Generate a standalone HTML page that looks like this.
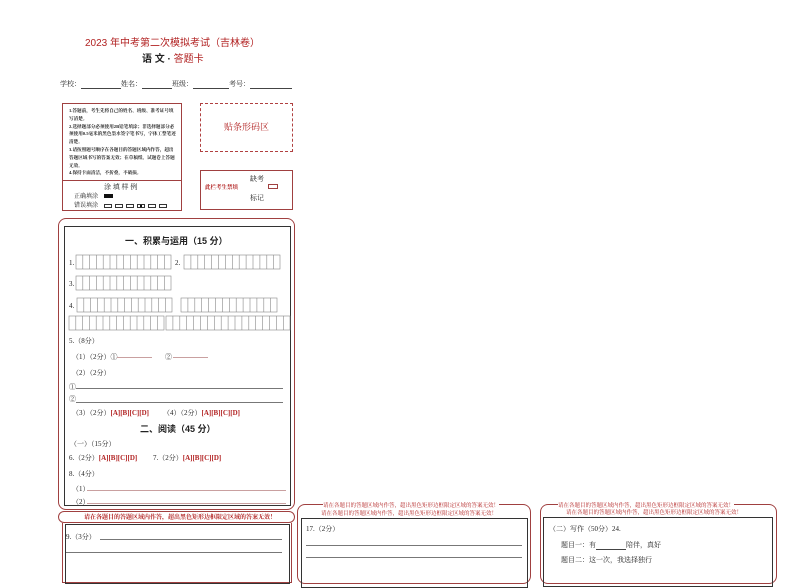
<!DOCTYPE html>
<html><head><meta charset="utf-8">
<style>
*{margin:0;padding:0;box-sizing:border-box}
body{width:794px;height:562px;background:#fff;position:relative;overflow:hidden;font-family:"Liberation Serif","Noto Serif CJK SC","Noto Sans CJK SC",serif;color:#222}
.a{position:absolute;white-space:nowrap}
.s{font-size:7px}
.r{color:#b22222}
.ul{display:inline-block;border-bottom:1px solid #444;vertical-align:bottom}
.rl{position:absolute;border-bottom:1px solid #c9a0a0}
.bl{position:absolute;border-bottom:1px solid #777}
.eb{display:inline-block;width:8px;height:4px;border:1px solid #333;margin-right:3px;vertical-align:middle}
</style></head><body>
<div class="a r" style="left:85px;top:34px;font-size:10px;font-family:'Liberation Sans','Noto Sans CJK SC',sans-serif">2023 年中考第二次模拟考试（吉林卷）</div>
<div class="a" style="left:142px;top:50px;font-size:10px;font-weight:bold;font-family:'Liberation Sans','Noto Sans CJK SC',sans-serif">语 文 · <span class="r" style="font-weight:normal">答题卡</span></div>
<div class="a" style="left:60px;top:79px;font-size:7px">学校：<span class="ul" style="width:40px"></span>姓名：<span class="ul" style="width:30px"></span>班级：<span class="ul" style="width:36px"></span>考号：<span class="ul" style="width:42px"></span></div>

<div class="a" style="left:62px;top:103px;width:120px;height:108px;border:1px solid #a04040"></div>
<div class="a" style="left:62px;top:180px;width:120px;height:1px;background:#a04040"></div>
<div class="a" style="left:69px;top:107px;font-size:4.6px;line-height:7.8px;white-space:normal;width:108px;font-weight:bold">1.答题前，考生先将自己的姓名、班级、准考证号填写清楚。<br>2.选择题部分必须使用2B铅笔填涂；非选择题部分必须使用0.5毫米的黑色墨水签字笔书写，字体工整笔迹清楚。<br>3.请按照题号顺序在各题目的答题区域内作答，超出答题区域书写的答案无效；在草稿纸、试题卷上答题无效。<br>4.保持卡面清洁，不折叠，不破损。</div>
<div class="a" style="left:104px;top:182px;font-size:7px">涂 填 样 例</div>
<div class="a" style="left:74px;top:191px;font-size:6px">正确填涂 <span style="display:inline-block;width:9px;height:4px;background:#111;margin-left:4px"></span></div>
<div class="a" style="left:74px;top:200px;font-size:6px">错误填涂 <span style="margin-left:4px"></span><span class="eb"></span><span class="eb"></span><span class="eb"></span><span class="eb" style="background:linear-gradient(90deg,#fff 30%,#111 30%,#111 70%,#fff 70%)"></span><span class="eb"></span><span class="eb"></span></div>

<div class="a" style="left:200px;top:103px;width:93px;height:49px;border:1px dashed #b04040"></div>
<div class="a r" style="left:224px;top:120px;font-size:9px">贴条形码区</div>
<div class="a" style="left:200px;top:170px;width:93px;height:40px;border:1px solid #a04040"></div>
<div class="a" style="left:250px;top:174px;font-size:7px">缺考</div>
<div class="a r" style="left:205px;top:183px;font-size:5.5px;font-weight:bold">此栏考生禁填</div>
<div class="a" style="left:268px;top:184px;width:10px;height:5px;border:1px solid #a04040"></div>
<div class="a" style="left:250px;top:193px;font-size:7px">标记</div>

<div class="a" style="left:58px;top:218px;width:237px;height:292px;border:1px solid #a04040;border-radius:8px"></div>
<div class="a" style="left:64px;top:226px;width:227px;height:280px;border:1px solid #333"></div>
<div class="a" style="left:125px;top:234px;font-size:9px;font-weight:bold;font-family:'Liberation Sans','Noto Sans CJK SC',sans-serif">一、积累与运用（15 分）</div>

<svg class="a" style="left:0;top:0" width="794" height="562">
<g stroke="#888" stroke-width="0.6" fill="none">
<rect x="76" y="255" width="95" height="14"/><path d="M82.8 255v14M89.6 255v14M96.4 255v14M103.2 255v14M110 255v14M116.8 255v14M123.6 255v14M130.4 255v14M137.2 255v14M144 255v14M150.8 255v14M157.6 255v14M164.4 255v14"/>
<rect x="184" y="255" width="96" height="14"/><path d="M190.9 255v14M197.8 255v14M204.7 255v14M211.6 255v14M218.5 255v14M225.4 255v14M232.3 255v14M239.2 255v14M246.1 255v14M253 255v14M259.9 255v14M266.8 255v14M273.7 255v14"/>
<rect x="76" y="276" width="95" height="14"/><path d="M82.8 276v14M89.6 276v14M96.4 276v14M103.2 276v14M110 276v14M116.8 276v14M123.6 276v14M130.4 276v14M137.2 276v14M144 276v14M150.8 276v14M157.6 276v14M164.4 276v14"/>
<rect x="77" y="298" width="95" height="14"/><path d="M83.8 298v14M90.6 298v14M97.4 298v14M104.2 298v14M111 298v14M117.8 298v14M124.6 298v14M131.4 298v14M138.2 298v14M145 298v14M151.8 298v14M158.6 298v14M165.4 298v14"/>
<rect x="181" y="298" width="96" height="14"/><path d="M187.9 298v14M194.8 298v14M201.7 298v14M208.6 298v14M215.5 298v14M222.4 298v14M229.3 298v14M236.2 298v14M243.1 298v14M250 298v14M256.9 298v14M263.8 298v14M270.7 298v14"/>
<rect x="69" y="316" width="95" height="14"/><path d="M75.8 316v14M82.6 316v14M89.4 316v14M96.2 316v14M103 316v14M109.8 316v14M116.6 316v14M123.4 316v14M130.2 316v14M137 316v14M143.8 316v14M150.6 316v14M157.4 316v14"/>
<rect x="166" y="316" width="124" height="14"/><path d="M172.9 316v14M179.8 316v14M186.7 316v14M193.6 316v14M200.5 316v14M207.4 316v14M214.3 316v14M221.2 316v14M228.1 316v14M235 316v14M241.9 316v14M248.8 316v14M255.7 316v14M262.6 316v14M269.5 316v14M276.4 316v14M283.3 316v14"/>
</g></svg>
<div class="a s" style="left:69px;top:259px">1.</div>
<div class="a s" style="left:175px;top:259px">2.</div>
<div class="a s" style="left:69px;top:280px">3.</div>
<div class="a s" style="left:69px;top:302px">4.</div>

<div class="a s" style="left:69px;top:336px">5.（8分）</div>
<div class="a s" style="left:72px;top:352px">（1）（2分）①</div>
<div class="rl" style="left:117px;top:357px;width:35px"></div>
<div class="a s" style="left:165px;top:352px">②</div>
<div class="rl" style="left:173px;top:357px;width:35px"></div>
<div class="a s" style="left:72px;top:368px">（2）（2分）</div>
<div class="a s" style="left:69px;top:382px">①</div>
<div class="bl" style="left:76px;top:388px;width:207px"></div>
<div class="a s" style="left:69px;top:394px">②</div>
<div class="bl" style="left:76px;top:402px;width:207px"></div>
<div class="a s" style="left:72px;top:408px">（3）（2分）<span class="r" style="font-weight:bold">[A][B][C][D]</span>&nbsp;&nbsp;&nbsp;&nbsp;&nbsp;&nbsp;&nbsp;&nbsp;（4）（2分）<span class="r" style="font-weight:bold">[A][B][C][D]</span></div>
<div class="a" style="left:140px;top:422px;font-size:9px;font-weight:bold;font-family:'Liberation Sans','Noto Sans CJK SC',sans-serif">二、阅读（45 分）</div>
<div class="a s" style="left:70px;top:439px">（一）（15分）</div>
<div class="a s" style="left:69px;top:453px">6.（2分）<span class="r" style="font-weight:bold">[A][B][C][D]</span>&nbsp;&nbsp;&nbsp;&nbsp;&nbsp;&nbsp;&nbsp;&nbsp;&nbsp;7.（2分）<span class="r" style="font-weight:bold">[A][B][C][D]</span></div>
<div class="a s" style="left:69px;top:469px">8.（4分）</div>
<div class="a s" style="left:72px;top:484px">（1）</div>
<div class="rl" style="left:87px;top:490px;width:199px"></div>
<div class="a s" style="left:72px;top:497px">（2）</div>
<div class="rl" style="left:87px;top:503px;width:199px"></div>

<div class="a" style="left:58px;top:511px;width:237px;height:12px;border:1px solid #a04040;border-radius:6px"></div>
<div class="a r" style="left:84px;top:512px;font-size:6px;font-weight:bold">请在各题目的答题区域内作答，超出黑色矩形边框限定区域的答案无效！</div>
<div class="a" style="left:62px;top:523px;width:230px;height:60px;border:1px solid #a04040;border-top:none"></div>
<div class="a" style="left:65px;top:524px;width:225px;height:60px;border:1px solid #333"></div>
<div class="a s" style="left:66px;top:532px">9.（3分）</div>
<div class="bl" style="left:100px;top:539px;width:182px"></div>
<div class="bl" style="left:66px;top:552px;width:216px"></div>

<div class="a" style="left:297px;top:504px;width:234px;height:80px;border:1px solid #a04040;border-radius:8px"></div>
<div class="a r" style="left:323px;top:501px;font-size:5.5px;background:#fff">请在各题目的答题区域内作答，超出黑色矩形边框限定区域的答案无效！</div>
<div class="a r" style="left:321px;top:509px;font-size:5.5px">请在各题目的答题区域内作答，超出黑色矩形边框限定区域的答案无效！</div>
<div class="a" style="left:301px;top:518px;width:227px;height:70px;border:1px solid #333"></div>
<div class="a s" style="left:306px;top:524px">17.（2分）</div>
<div class="bl" style="left:306px;top:545px;width:216px"></div>
<div class="bl" style="left:306px;top:557px;width:216px"></div>

<div class="a" style="left:540px;top:504px;width:237px;height:80px;border:1px solid #a04040;border-radius:8px"></div>
<div class="a r" style="left:558px;top:501px;font-size:5.5px;background:#fff">请在各题目的答题区域内作答，超出黑色矩形边框限定区域的答案无效！</div>
<div class="a r" style="left:566px;top:508px;font-size:5.5px">请在各题目的答题区域内作答，超出黑色矩形边框限定区域的答案无效！</div>
<div class="a" style="left:543px;top:517px;width:230px;height:70px;border:1px solid #333"></div>
<div class="a s" style="left:549px;top:524px">（二）写作（50分）24.</div>
<div class="a s" style="left:561px;top:540px">题目一：有<span class="ul" style="width:30px"></span>陪伴，真好</div>
<div class="a s" style="left:561px;top:555px">题目二：这一次，我选择独行</div>
</body></html>
